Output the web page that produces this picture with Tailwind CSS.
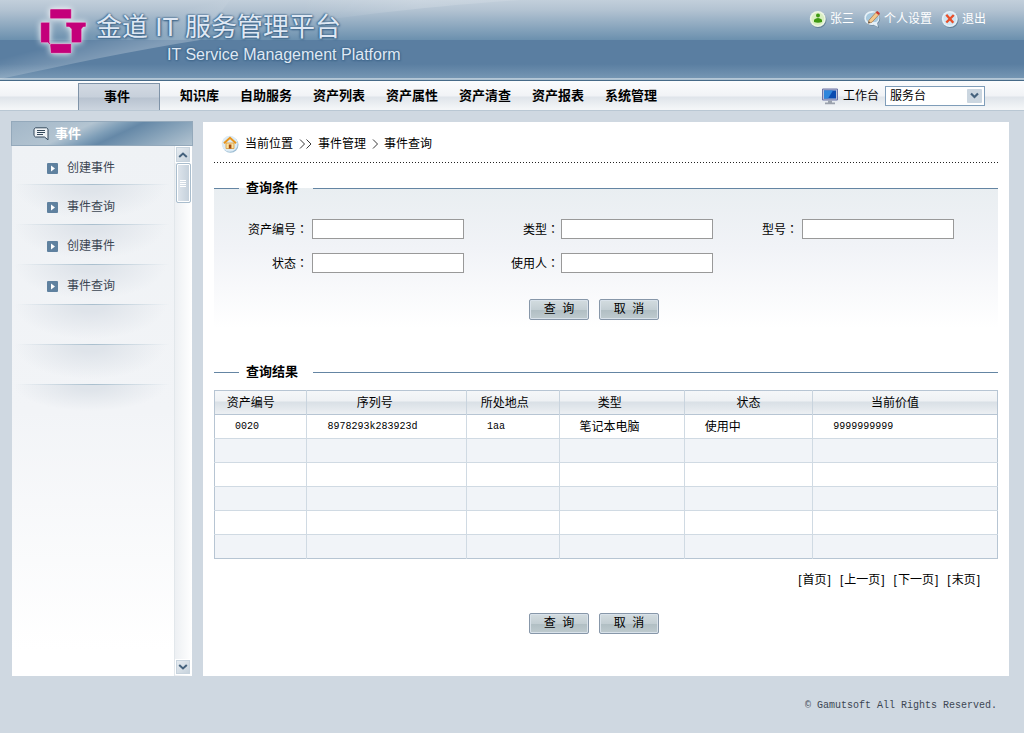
<!DOCTYPE html>
<html lang="zh-CN">
<head>
<meta charset="utf-8">
<title>金道 IT 服务管理平台</title>
<script src="https://cdn.jsdelivr.net/npm/@tailwindcss/browser@4"></script>
</head>
<body class="min-h-screen bg-[#cfd8e1] font-['Liberation_Sans','Noto_Sans_CJK_SC',sans-serif] text-xs leading-5 text-black">

<header class="relative h-[81px] overflow-hidden border-b border-[#466a88] bg-[linear-gradient(to_bottom,#c2cfdb_0,#b3c3d2_10px,#6b90ae_40px,#5a7ea1_40px,#5a7ea1_64px,#7596b3_78px,#b9cad8_78px,#a5bccd_80px)]">
  <svg class="absolute inset-0" width="700" height="80" viewBox="0 0 700 80" aria-hidden="true">
    <defs>
      <linearGradient id="shine" gradientUnits="userSpaceOnUse" x1="115" y1="56" x2="108" y2="30">
        <stop offset="0" stop-color="#fff" stop-opacity=".24"/>
        <stop offset="1" stop-color="#fff" stop-opacity="0"/>
      </linearGradient>
      <linearGradient id="shineTop" gradientUnits="userSpaceOnUse" x1="300" y1="0" x2="700" y2="0">
        <stop offset="0" stop-color="#fff" stop-opacity="0"/>
        <stop offset=".3" stop-color="#fff" stop-opacity=".16"/>
        <stop offset="1" stop-color="#fff" stop-opacity="0"/>
      </linearGradient>
    </defs>
    <path d="M0 79C70 64 130 51 200 40L230 0H0Z" fill="url(#shine)"/>
    <path d="M200 40C300 22 400 8 520 0H230Z" fill="url(#shineTop)"/>
  </svg>
  <div class="relative flex items-start justify-between pl-[38px] pr-[38px]">
    <div class="flex">
      <svg class="mt-[6px] shrink-0 overflow-visible drop-shadow-[0_0_3px_#fff]" width="52" height="52" viewBox="114 18 156 156" role="img" aria-label="金道">
        <g fill="#c4007a" stroke="#e9d3e2" stroke-width="1.5">
          <path d="M152 27h60l2 2v25l-2 2h-60l-2-2V29z"/>
          <path d="M124 67h25v61l8 8-3 3-10-11h-20l-2-2V69z"/>
          <path d="M152 131h60l2 2v25l-2 2h-58l-2-2-2-22z"/>
          <path d="M198 67h59l1 2v10l-2 2h-6l-5 6v39l-2 2h-27l-2-2V87l-6-6h-9l-1-2z"/>
        </g>
      </svg>
      <div class="ml-[6px] mt-[11px] text-[#dfe8f4] [text-shadow:0_0_2px_#3f668a,1px_1px_2px_#3f668a,-1px_0_2px_#3f668a]">
        <h1 class="whitespace-nowrap text-[26px] leading-8">金道 IT 服务管理平台</h1>
        <p class="ml-[71px] whitespace-nowrap text-base leading-6">IT Service Management Platform</p>
      </div>
    </div>
    <nav class="mt-[9px] flex gap-[9px] text-white" aria-label="用户">
      <a href="#" class="flex items-center gap-[3px]">
        <svg width="18" height="18" viewBox="0 0 18 18" aria-hidden="true">
          <circle cx="9.500" cy="10" r="8" fill="#47677f" opacity=".6"/>
          <circle cx="8.800" cy="9" r="8" fill="#eef6e4"/>
          <circle cx="8.800" cy="9" r="6.400" fill="#d9efc0"/>
          <circle cx="9" cy="5.600" r="2" fill="#3e9a12"/>
          <path d="M5 12V9.800Q9 6.400 13 9.800V12Q9 13.600 5 12Z" fill="#3e9a12"/>
        </svg>
        张三
      </a>
      <a href="#" class="flex items-center gap-[2px]">
        <svg width="19" height="18" viewBox="0 0 19 18" aria-hidden="true">
          <path d="M9 1.500a7.500 7 0 1 0 2 13.800L16 18l-1.200-4.500A7 7 0 0 0 9 1.500Z" fill="#47677f" opacity=".6"/>
          <path d="M8.500 1a7.500 7 0 1 0 2 13.800L15 17l-.8-4A7 7 0 0 0 8.500 1Z" fill="#e6f1f8"/>
          <path d="M8.500 3a5.500 5 0 0 0-3 9.200L13 12a5 5 0 0 0-4.500-9Z" fill="#a8c9de"/>
          <path d="M6 10.200 13.500 1.800 16.400 4.200 9 12.200 5.300 13.300Z" fill="#f3c98d" stroke="#9b6536" stroke-width=".6"/>
          <path d="M12.700 2.700 14.300 1 17 3.300 15.500 5Z" fill="#c93a32"/>
          <path d="m5.300 13.300.5-2 1.500 1.300Z" fill="#444"/>
        </svg>
        个人设置
      </a>
      <a href="#" class="flex items-center gap-[3px]">
        <svg width="18" height="18" viewBox="0 0 18 18" aria-hidden="true">
          <circle cx="9.500" cy="10" r="8" fill="#47677f" opacity=".6"/>
          <circle cx="8.800" cy="9" r="8" fill="#e4f1f9"/>
          <circle cx="8.800" cy="9" r="6.400" fill="#d0e4f2"/>
          <path d="m5.300 4.800 7 8M12.800 5l-7.500 7.500" stroke="#e8502a" stroke-width="2.400" fill="none"/>
        </svg>
        退出
      </a>
    </nav>
  </div>
</header>

<div class="flex h-[30px] items-end border-b border-[#b9c7d3] bg-[linear-gradient(to_bottom,#fbfcfd_0,#f1f3f6_15px,#dfe4ea_16px,#f4f6f8_28px)] pl-[78px] pr-[39px]">
  <nav class="flex h-full flex-1 items-end whitespace-nowrap text-[13px] font-bold" aria-label="主导航">
    <a href="#" aria-current="page" class="flex h-[27px] w-[82px] items-center justify-center border border-b-0 border-[#7f93a8] bg-[linear-gradient(to_bottom,#d3dae3_0,#c7d0db_13px,#b8c3d0_14px,#ccd5df_26px)] pr-1 text-center">事件</a>
    <div class="ml-5 flex gap-[21px] pb-1">
      <a href="#">知识库</a>
      <a href="#">自助服务</a>
      <a href="#">资产列表</a>
      <a href="#">资产属性</a>
      <a href="#">资产清查</a>
      <a href="#">资产报表</a>
      <a href="#">系统管理</a>
    </div>
  </nav>
  <div class="flex items-center gap-[5px] pb-1">
    <svg width="16" height="17" viewBox="0 0 16 17" aria-hidden="true">
      <path d="M.5 1h15v11H.5z" fill="#b9bfd8" stroke="#6d75a6"/>
      <path d="M2 2.500h12v8H2z" fill="#0b4bb0"/>
      <path d="M2 2.500h9l-5 8H2z" fill="#2f86dc"/>
      <path d="M6 12.500h4v2h3v1.700H3v-1.700h3z" fill="#9aa1ac"/>
    </svg>
    <label for="desk" class="whitespace-nowrap">工作台</label>
    <div class="relative ml-px">
      <select id="desk" class="block h-5 w-[100px] appearance-none border border-[#7f9db9] bg-white pl-1 text-xs leading-[18px]">
        <option>服务台</option>
      </select>
      <svg class="pointer-events-none absolute right-[3px] top-[3px]" width="15" height="14" viewBox="0 0 15 14" aria-hidden="true">
        <rect width="15" height="14" rx="1" fill="#cbd6e0"/>
        <path d="m4 4.500 3.500 3.500L11 4.500" fill="none" stroke="#45627d" stroke-width="2.200"/>
      </svg>
    </div>
  </div>
</div>

<div class="flex items-stretch gap-[10px] pl-[11px] pr-[15px] pt-[10px]">
  <aside class="flex w-[182px] shrink-0 flex-col">
    <h2 class="flex h-[25px] items-center border border-[#94a9bb] bg-[linear-gradient(155deg,#a3b7c8_0,#b3c4d1_36%,#7d9db7_50%,#6588a7_58%,#86a2b9_76%,#b3c4d1_100%)] pl-[21px] text-[13px] font-bold text-white">
      <svg class="mr-[6px]" width="16" height="14" viewBox="0 0 16 14" aria-hidden="true">
        <path d="M2.500.8h11l1.500 1.400v10.600L11.500 10H2.500L1 8.600V2.200Z" fill="#eef2f5" stroke="#34495c"/>
        <path d="M4 3.500h8M4 5.500h8M4 7.500h6" stroke="#34495c"/>
      </svg>
      事件
    </h2>
    <div class="mx-px flex flex-1 bg-[linear-gradient(to_bottom,#eff2f5_0,#f2f4f7_50%,#ffffff_95%)]">
      <ul class="flex-1 text-[#3c4653]">
        <li class="flex h-[39px] flex-col justify-between">
          <a href="#" class="flex items-center gap-[9px] pl-[35px] pt-3"><svg width="11" height="11" viewBox="0 0 11 11" aria-hidden="true"><rect width="11" height="11" rx="1" fill="#5f819f"/><path d="M4 2.500 8 5.500 4 8.500Z" fill="#fff"/></svg>创建事件</a>
          <div class="mx-1 h-px bg-linear-to-r from-transparent via-[#a9bfce] to-transparent"></div>
        </li>
        <li class="flex h-10 flex-col justify-between bg-[radial-gradient(ellipse_76px_34px_at_78px_0,#dfe4ea_20%,transparent_100%)]">
          <a href="#" class="flex items-center gap-[9px] pl-[35px] pt-3"><svg width="11" height="11" viewBox="0 0 11 11" aria-hidden="true"><rect width="11" height="11" rx="1" fill="#5f819f"/><path d="M4 2.500 8 5.500 4 8.500Z" fill="#fff"/></svg>事件查询</a>
          <div class="mx-1 h-px bg-linear-to-r from-transparent via-[#a9bfce] to-transparent"></div>
        </li>
        <li class="flex h-10 flex-col justify-between bg-[radial-gradient(ellipse_76px_34px_at_78px_0,#dfe4ea_20%,transparent_100%)]">
          <a href="#" class="flex items-center gap-[9px] pl-[35px] pt-[11px]"><svg width="11" height="11" viewBox="0 0 11 11" aria-hidden="true"><rect width="11" height="11" rx="1" fill="#5f819f"/><path d="M4 2.500 8 5.500 4 8.500Z" fill="#fff"/></svg>创建事件</a>
          <div class="mx-1 h-px bg-linear-to-r from-transparent via-[#a9bfce] to-transparent"></div>
        </li>
        <li class="flex h-10 flex-col justify-between bg-[radial-gradient(ellipse_76px_34px_at_78px_0,#dfe4ea_20%,transparent_100%)]">
          <a href="#" class="flex items-center gap-[9px] pl-[35px] pt-[11px]"><svg width="11" height="11" viewBox="0 0 11 11" aria-hidden="true"><rect width="11" height="11" rx="1" fill="#5f819f"/><path d="M4 2.500 8 5.500 4 8.500Z" fill="#fff"/></svg>事件查询</a>
          <div class="mx-1 h-px bg-linear-to-r from-transparent via-[#a9bfce] to-transparent"></div>
        </li>
        <li class="flex h-10 flex-col justify-end bg-[radial-gradient(ellipse_76px_34px_at_78px_0,#dfe4ea_20%,transparent_100%)]">
          <div class="mx-1 h-px bg-linear-to-r from-transparent via-[#a9bfce] to-transparent"></div>
        </li>
        <li class="flex h-10 flex-col justify-end bg-[radial-gradient(ellipse_76px_34px_at_78px_0,#dfe4ea_20%,transparent_100%)]">
          <div class="mx-1 h-px bg-linear-to-r from-transparent via-[#a9bfce] to-transparent"></div>
        </li>
        <li class="h-10 bg-[radial-gradient(ellipse_76px_26px_at_78px_0,#dfe4ea_20%,transparent_100%)]"></li>
      </ul>
      <div class="flex w-[18px] flex-col items-center border-l border-[#e2e7eb] bg-linear-to-r from-[#edf0f3] to-white pb-px pr-px">
        <button type="button" aria-label="向上滚动" class="flex h-[17px] w-4 items-center justify-center border border-white bg-linear-to-br from-[#e8edf2] to-[#c5d1db] ring-1 ring-inset ring-[#c7d3dd]">
          <svg width="10" height="6" viewBox="0 0 10 6" aria-hidden="true"><path d="m1.200 5 3.800-3.500L8.800 5" fill="none" stroke="#45627d" stroke-width="2"/></svg>
        </button>
        <div class="flex h-10 w-[15px] flex-col items-center justify-center gap-px rounded-xs border border-[#a9bdcd] bg-linear-to-r from-[#dfe6ed] to-[#c3cfda] shadow-[inset_0_0_0_1px_#fff]">
          <div class="h-px w-[6px] bg-white"></div><div class="h-px w-[6px] bg-white"></div><div class="h-px w-[6px] bg-white"></div><div class="h-px w-[6px] bg-white"></div>
        </div>
        <button type="button" aria-label="向下滚动" class="mt-auto flex h-4 w-4 items-center justify-center border border-white bg-linear-to-br from-[#e8edf2] to-[#c5d1db] ring-1 ring-inset ring-[#c7d3dd]">
          <svg width="10" height="6" viewBox="0 0 10 6" aria-hidden="true"><path d="m1.200 1 3.800 3.500L8.800 1" fill="none" stroke="#45627d" stroke-width="2"/></svg>
        </button>
      </div>
    </div>
  </aside>

  <main class="mt-px min-w-0 flex-1 bg-white px-[11px] pb-[42px]">
    <nav class="flex h-10 items-center pl-[7px] pt-1" aria-label="当前位置">
      <svg class="mr-[6px]" width="18" height="18" viewBox="0 0 18 18" aria-hidden="true">
        <circle cx="9.500" cy="9.800" r="8" fill="#9dbdd3"/>
        <circle cx="8.700" cy="8.800" r="8" fill="#dcebf5"/>
        <path d="M5 8h8v5.500H5z" fill="#fbe2a0" stroke="#d99a3a" stroke-width=".8"/>
        <path d="M3 8.300 9 2.800 15 8.300" fill="none" stroke="#e8951c" stroke-width="2"/>
        <path d="M7.800 9.500h2.600v4H7.800z" fill="#a04a12"/>
      </svg>
      <span>当前位置</span>
      <svg class="mx-[6px]" width="13" height="10" viewBox="0 0 13 10" aria-hidden="true"><path d="m1 .5 4.500 4.500L1 9.500M7.500.5 12 5 7.500 9.500" fill="none" stroke="#222" stroke-width=".9"/></svg>
      <a href="#">事件管理</a>
      <svg class="mx-[6px]" width="6" height="10" viewBox="0 0 6 10" aria-hidden="true"><path d="M1 .5 5.500 5 1 9.500" fill="none" stroke="#222" stroke-width=".9"/></svg>
      <a href="#">事件查询</a>
    </nav>
    <div class="h-px bg-[repeating-linear-gradient(90deg,#222_0,#222_1px,transparent_1px,transparent_3px)]"></div>

    <section class="mt-[15px] bg-[linear-gradient(to_bottom,transparent_10px,#e9eef1_10px,#f1f3f7_70px,#ffffff_150px)] pb-6">
      <div class="flex items-center gap-[7px]">
        <div class="h-px w-[25px] bg-[#6485a3]"></div>
        <h2 class="w-[60px] whitespace-nowrap text-[13px] font-bold">查询条件</h2>
        <div class="h-px flex-1 bg-[#6485a3]"></div>
      </div>
      <form>
        <div class="mt-[21px] grid auto-rows-[20px] grid-cols-[98fr_152px_97fr_152px_89fr_152px_44fr] gap-y-[14px]">
          <label for="asset" class="whitespace-nowrap pr-1 text-right">资产编号<span lang="zh-TW" class="font-['Noto_Sans_CJK_TC',sans-serif]">：</span></label>
          <input id="asset" type="text" class="h-5 w-full border border-[#999] bg-white px-1">
          <label for="kind" class="whitespace-nowrap pr-0.5 text-right">类型<span lang="zh-TW" class="font-['Noto_Sans_CJK_TC',sans-serif]">：</span></label>
          <input id="kind" type="text" class="h-5 w-full border border-[#999] bg-white px-1">
          <label for="model" class="whitespace-nowrap pr-1 text-right">型号<span lang="zh-TW" class="font-['Noto_Sans_CJK_TC',sans-serif]">：</span></label>
          <input id="model" type="text" class="h-5 w-full border border-[#999] bg-white px-1">
          <label for="state" class="col-start-1 whitespace-nowrap pr-1 text-right">状态<span lang="zh-TW" class="font-['Noto_Sans_CJK_TC',sans-serif]">：</span></label>
          <input id="state" type="text" class="h-5 w-full border border-[#999] bg-white px-1">
          <label for="user" class="whitespace-nowrap pr-0.5 text-right">使用人<span lang="zh-TW" class="font-['Noto_Sans_CJK_TC',sans-serif]">：</span></label>
          <input id="user" type="text" class="h-5 w-full border border-[#999] bg-white px-1">
        </div>
        <div class="mt-[26px] flex justify-center gap-[10px] pr-6">
          <button type="button" class="h-[21px] w-[60px] rounded-xs border border-[#8797a9] bg-[linear-gradient(to_bottom,#d3dce0_0,#c3ced3_50%,#b1bfc4_55%,#bfcbcf_100%)] leading-[17px] shadow-[inset_0_0_0_1px_#d9e2ea]">查&nbsp;&nbsp;询</button>
          <button type="button" class="h-[21px] w-[60px] rounded-xs border border-[#8797a9] bg-[linear-gradient(to_bottom,#d3dce0_0,#c3ced3_50%,#b1bfc4_55%,#bfcbcf_100%)] leading-[17px] shadow-[inset_0_0_0_1px_#d9e2ea]">取&nbsp;&nbsp;消</button>
        </div>
      </form>
    </section>

    <section class="mt-[18px]">
      <div class="flex items-center gap-[7px]">
        <div class="h-px w-[25px] bg-[#6485a3]"></div>
        <h2 class="w-[60px] whitespace-nowrap text-[13px] font-bold">查询结果</h2>
        <div class="h-px flex-1 bg-[#6485a3]"></div>
      </div>
      <table class="mt-2 w-full table-fixed border-collapse border border-[#b7c5d3]">
        <colgroup>
          <col class="w-[11.8%]"><col class="w-[20.4%]"><col class="w-[11.8%]"><col class="w-[16%]"><col class="w-[16.4%]"><col>
        </colgroup>
        <thead>
          <tr class="h-6 border-b border-[#b7c5d3] bg-[linear-gradient(to_bottom,#f5f7f9_0,#eef1f4_10px,#d9e0e6_11px,#eef1f4_24px)]">
            <th scope="col" class="border-r border-[#c9d4de] p-0 pr-5 font-normal">资产编号</th>
            <th scope="col" class="border-r border-[#c9d4de] p-0 pr-6 font-normal">序列号</th>
            <th scope="col" class="border-r border-[#c9d4de] p-0 pr-4 font-normal">所处地点</th>
            <th scope="col" class="border-r border-[#c9d4de] p-0 pr-6 font-normal">类型</th>
            <th scope="col" class="border-r border-[#c9d4de] p-0 font-normal">状态</th>
            <th scope="col" class="p-0 pr-5 font-normal">当前价值</th>
          </tr>
        </thead>
        <tbody class="divide-y divide-[#d0dae3] [&_td]:border-[#d0dae3] [&_td]:py-0 [&_td]:pl-5 [&_td]:pr-0 [&_td:not(:last-child)]:border-r">
          <tr class="h-6"><td class="font-['Liberation_Mono',monospace] text-[10px]">0020</td><td class="font-['Liberation_Mono',monospace] text-[10px]">8978293k283923d</td><td class="font-['Liberation_Mono',monospace] text-[10px]">1aa</td><td>笔记本电脑</td><td>使用中</td><td class="font-['Liberation_Mono',monospace] text-[10px]">9999999999</td></tr>
          <tr class="h-6 bg-[#f1f4f8]"><td></td><td></td><td></td><td></td><td></td><td></td></tr>
          <tr class="h-6"><td></td><td></td><td></td><td></td><td></td><td></td></tr>
          <tr class="h-6 bg-[#f1f4f8]"><td></td><td></td><td></td><td></td><td></td><td></td></tr>
          <tr class="h-6"><td></td><td></td><td></td><td></td><td></td><td></td></tr>
          <tr class="h-6 bg-[#f1f4f8]"><td></td><td></td><td></td><td></td><td></td><td></td></tr>
        </tbody>
      </table>
      <nav class="mt-[11px] flex justify-end gap-[9px] pr-[18px]" aria-label="分页">
        <a href="#">[<span class="px-px">首页</span>]</a>
        <a href="#">[<span class="px-px">上一页</span>]</a>
        <a href="#">[<span class="px-px">下一页</span>]</a>
        <a href="#">[<span class="px-px">末页</span>]</a>
      </nav>
      <div class="mt-[23px] flex justify-center gap-[10px] pr-6">
        <button type="button" class="h-[21px] w-[60px] rounded-xs border border-[#8797a9] bg-[linear-gradient(to_bottom,#d3dce0_0,#c3ced3_50%,#b1bfc4_55%,#bfcbcf_100%)] leading-[17px] shadow-[inset_0_0_0_1px_#d9e2ea]">查&nbsp;&nbsp;询</button>
        <button type="button" class="h-[21px] w-[60px] rounded-xs border border-[#8797a9] bg-[linear-gradient(to_bottom,#d3dce0_0,#c3ced3_50%,#b1bfc4_55%,#bfcbcf_100%)] leading-[17px] shadow-[inset_0_0_0_1px_#d9e2ea]">取&nbsp;&nbsp;消</button>
      </div>
    </section>
  </main>
</div>

<footer class="pr-[27px] pt-5 text-right font-['Liberation_Mono',monospace] text-[10px] leading-5 text-[#3c4653]">© Gamutsoft All Rights Reserved.</footer>
</body>
</html>
